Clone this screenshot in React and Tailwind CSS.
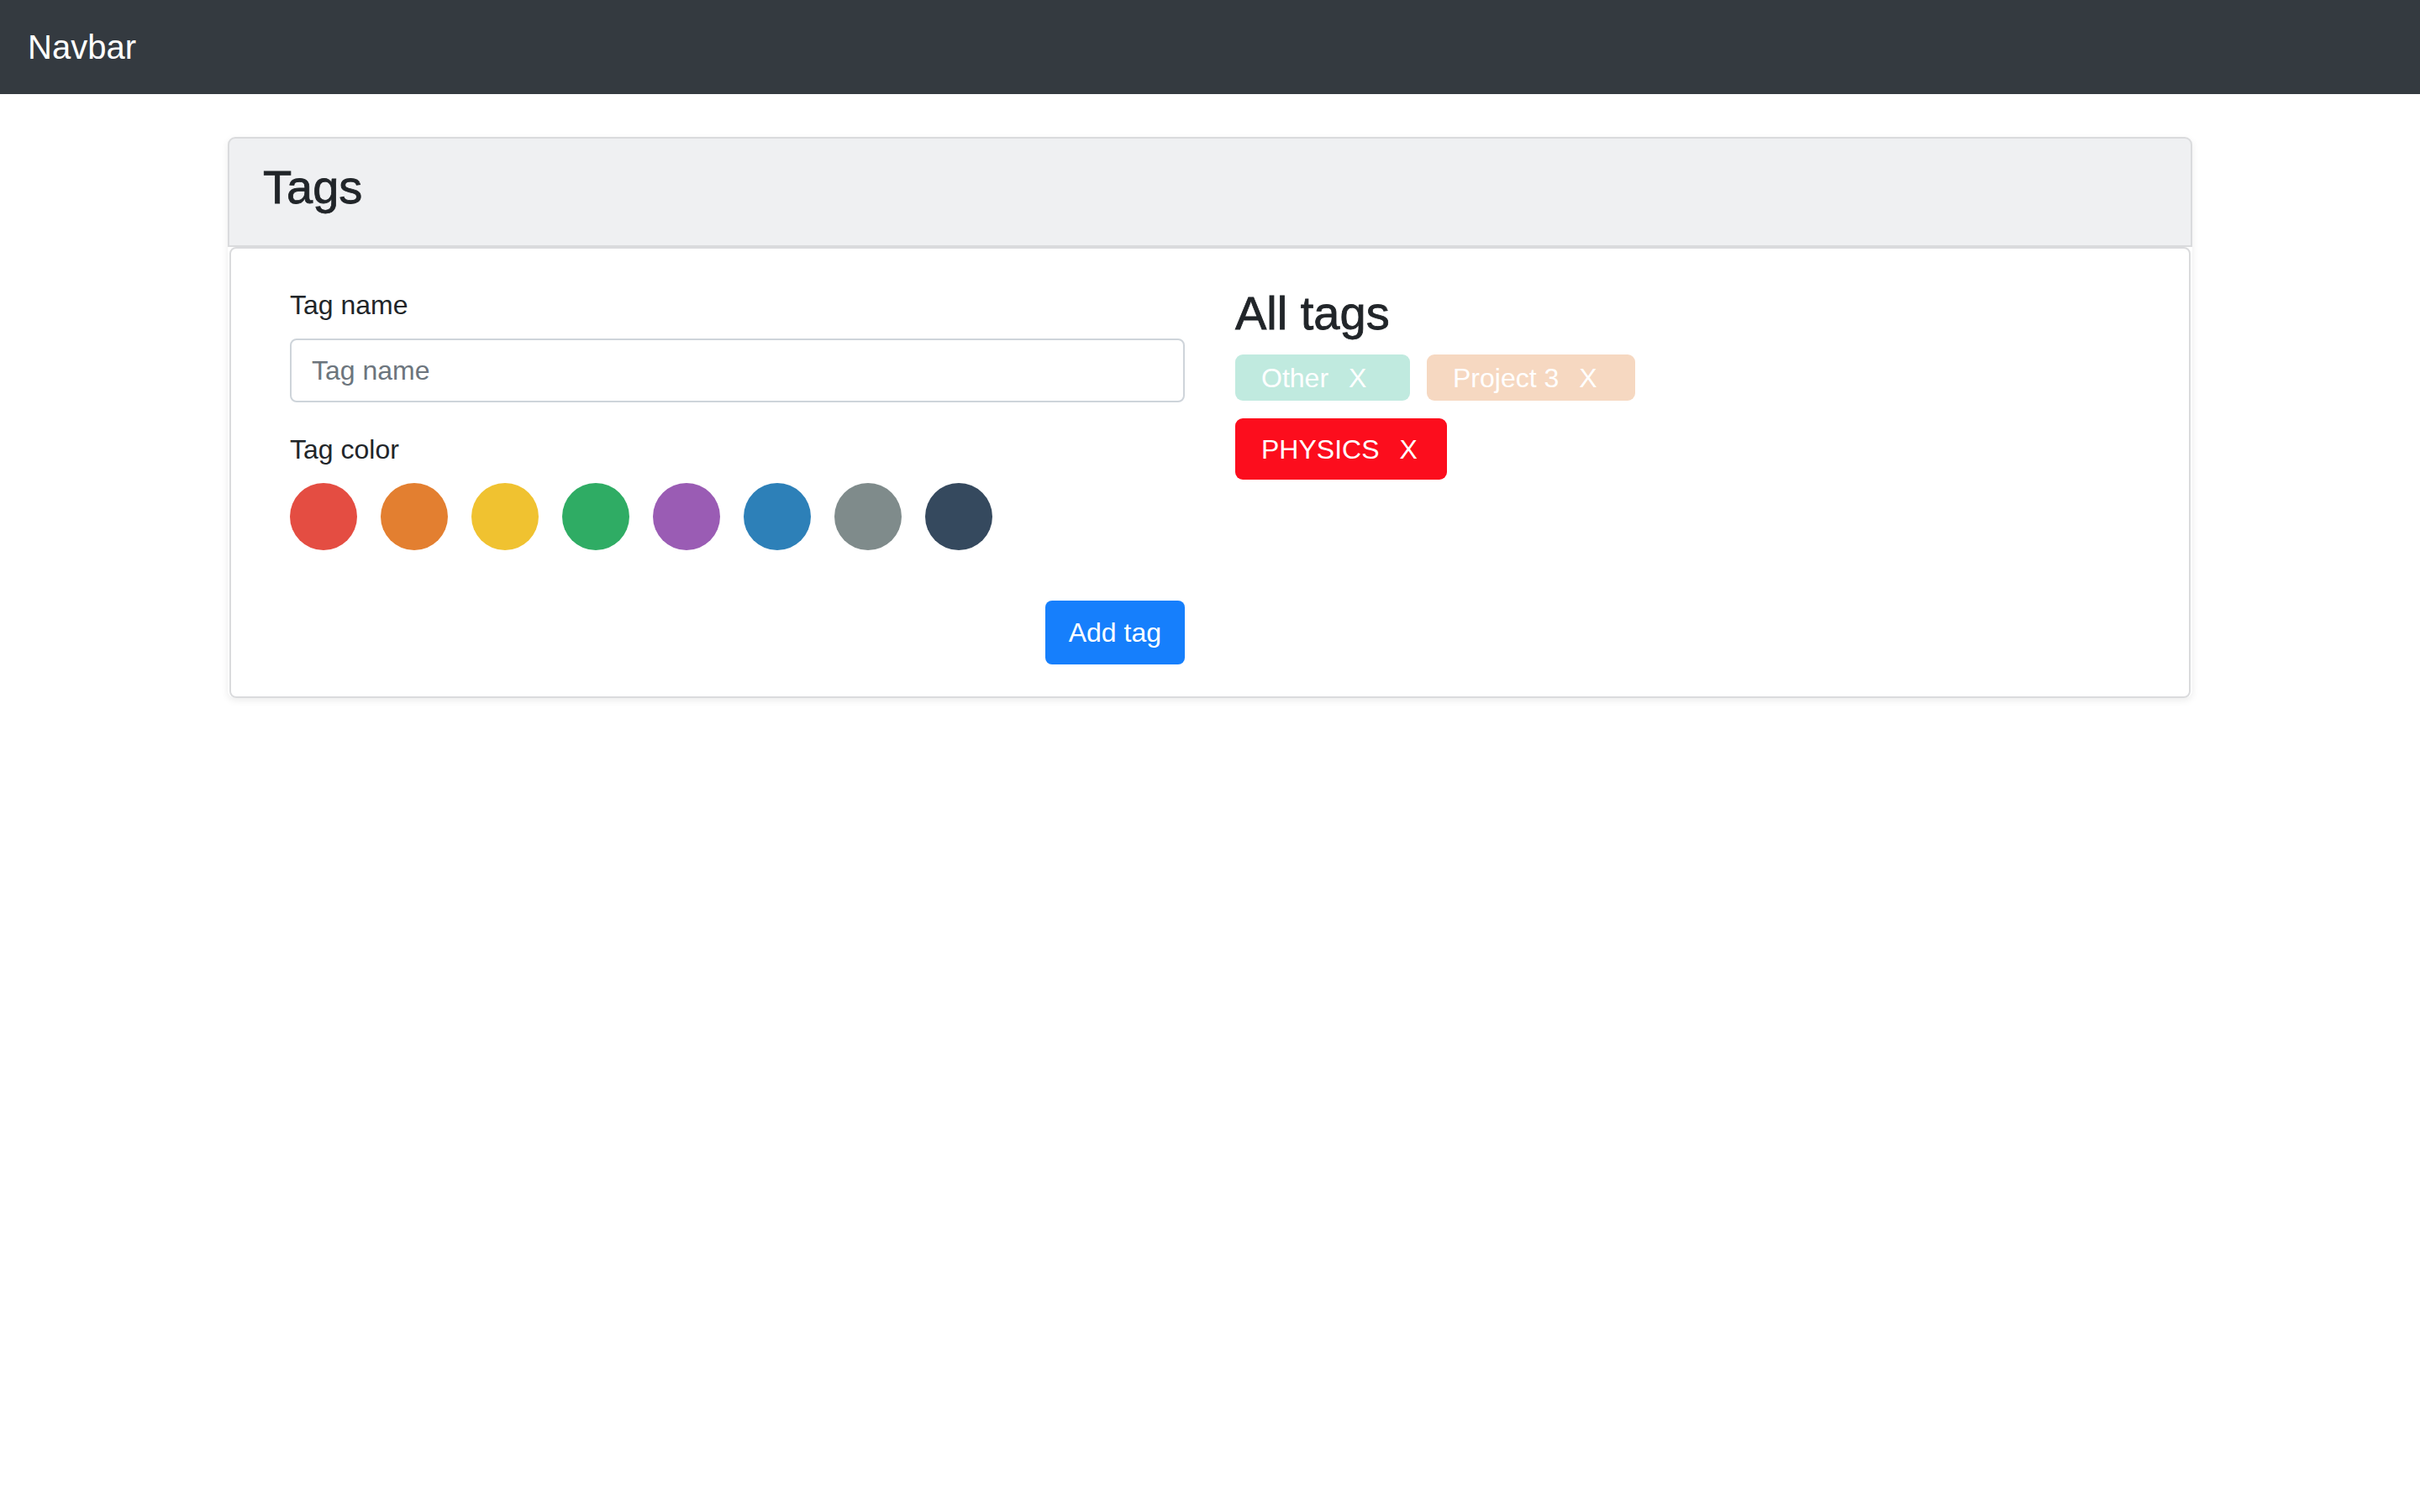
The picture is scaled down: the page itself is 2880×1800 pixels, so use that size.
const colors = [
  'bg-[#e44d42]',
  'bg-[#e37f30]',
  'bg-[#f0c230]',
  'bg-[#2fac64]',
  'bg-[#9a5cb4]',
  'bg-[#2d80b8]',
  'bg-[#7f8b8b]',
  'bg-[#35495e]',
];

const Chip = ({ name, className }) => (
  <div className={`flex items-center rounded-[9px] pl-[31px] text-[32px] leading-[48px] text-white ${className}`}>
    <span>{name}</span>
    <span className="ml-[24px]">X</span>
  </div>
);

const App = () => {
  return (
    <div className="min-h-screen bg-white text-[#212529] font-['Liberation_Sans',Arial,sans-serif]">
      {/* Navbar */}
      <nav className="flex h-[112px] items-center bg-[#343a40] px-[33px]">
        <span className="text-[40px] leading-[60px] text-white">Navbar</span>
      </nav>

      <div className="mx-auto mt-[51px] w-[2338px] rounded-[9px] shadow-[0_3px_8px_rgba(0,0,0,0.08)]">
        {/* Header */}
        <div className="rounded-t-[9px] border-2 border-[#dadbdd] bg-[#eff0f2] px-[40px] pt-[24px] pb-[36px]">
          <h3 className="text-[56px] leading-[67px] font-medium [-webkit-text-stroke:0.8px_#212529]">Tags</h3>
        </div>

        {/* Body */}
        <div className="mx-[2px] rounded-[8px] border-2 border-[#dadbdd] bg-white px-[40px] pt-[43px] pb-[38px]">
          <div className="grid grid-cols-2">
            {/* Left column */}
            <div className="px-[30px]">
              <label className="mb-[16px] block text-[32px] leading-[48px]">Tag name</label>
              <input
                type="text"
                placeholder="Tag name"
                className="mb-[32px] block h-[76px] w-full rounded-[8px] border-2 border-[#ced4da] px-[24px] text-[32px] text-[#495057] outline-none placeholder:text-[#6c757d]"
              />
              <label className="mb-[16px] block text-[32px] leading-[48px]">Tag color</label>
              <div className="flex gap-[28px]">
                {colors.map((c) => (
                  <div key={c} className={`h-[80px] w-[80px] rounded-full ${c}`} />
                ))}
              </div>
              <div className="mt-[60px] flex justify-end">
                <button className="h-[76px] rounded-[8px] bg-[#167ffc] px-[28px] text-[32px] text-white">
                  Add tag
                </button>
              </div>
            </div>

            {/* Right column */}
            <div className="px-[30px]">
              <h3 className="mb-[16px] text-[56px] leading-[67px] font-medium [-webkit-text-stroke:0.8px_#212529]">All tags</h3>
              <div className="flex gap-[20px]">
                <Chip name="Other" className="h-[55px] w-[208px] bg-[#c0eadf]" />
                <Chip name="Project 3" className="h-[55px] w-[248px] bg-[#f6d8c1]" />
              </div>
              <div className="mt-[21px] flex">
                <Chip name="PHYSICS" className="h-[73px] w-[252px] bg-[#fc0d1d]" />
              </div>
            </div>
          </div>
        </div>
      </div>
    </div>
  );
};

export default App;
